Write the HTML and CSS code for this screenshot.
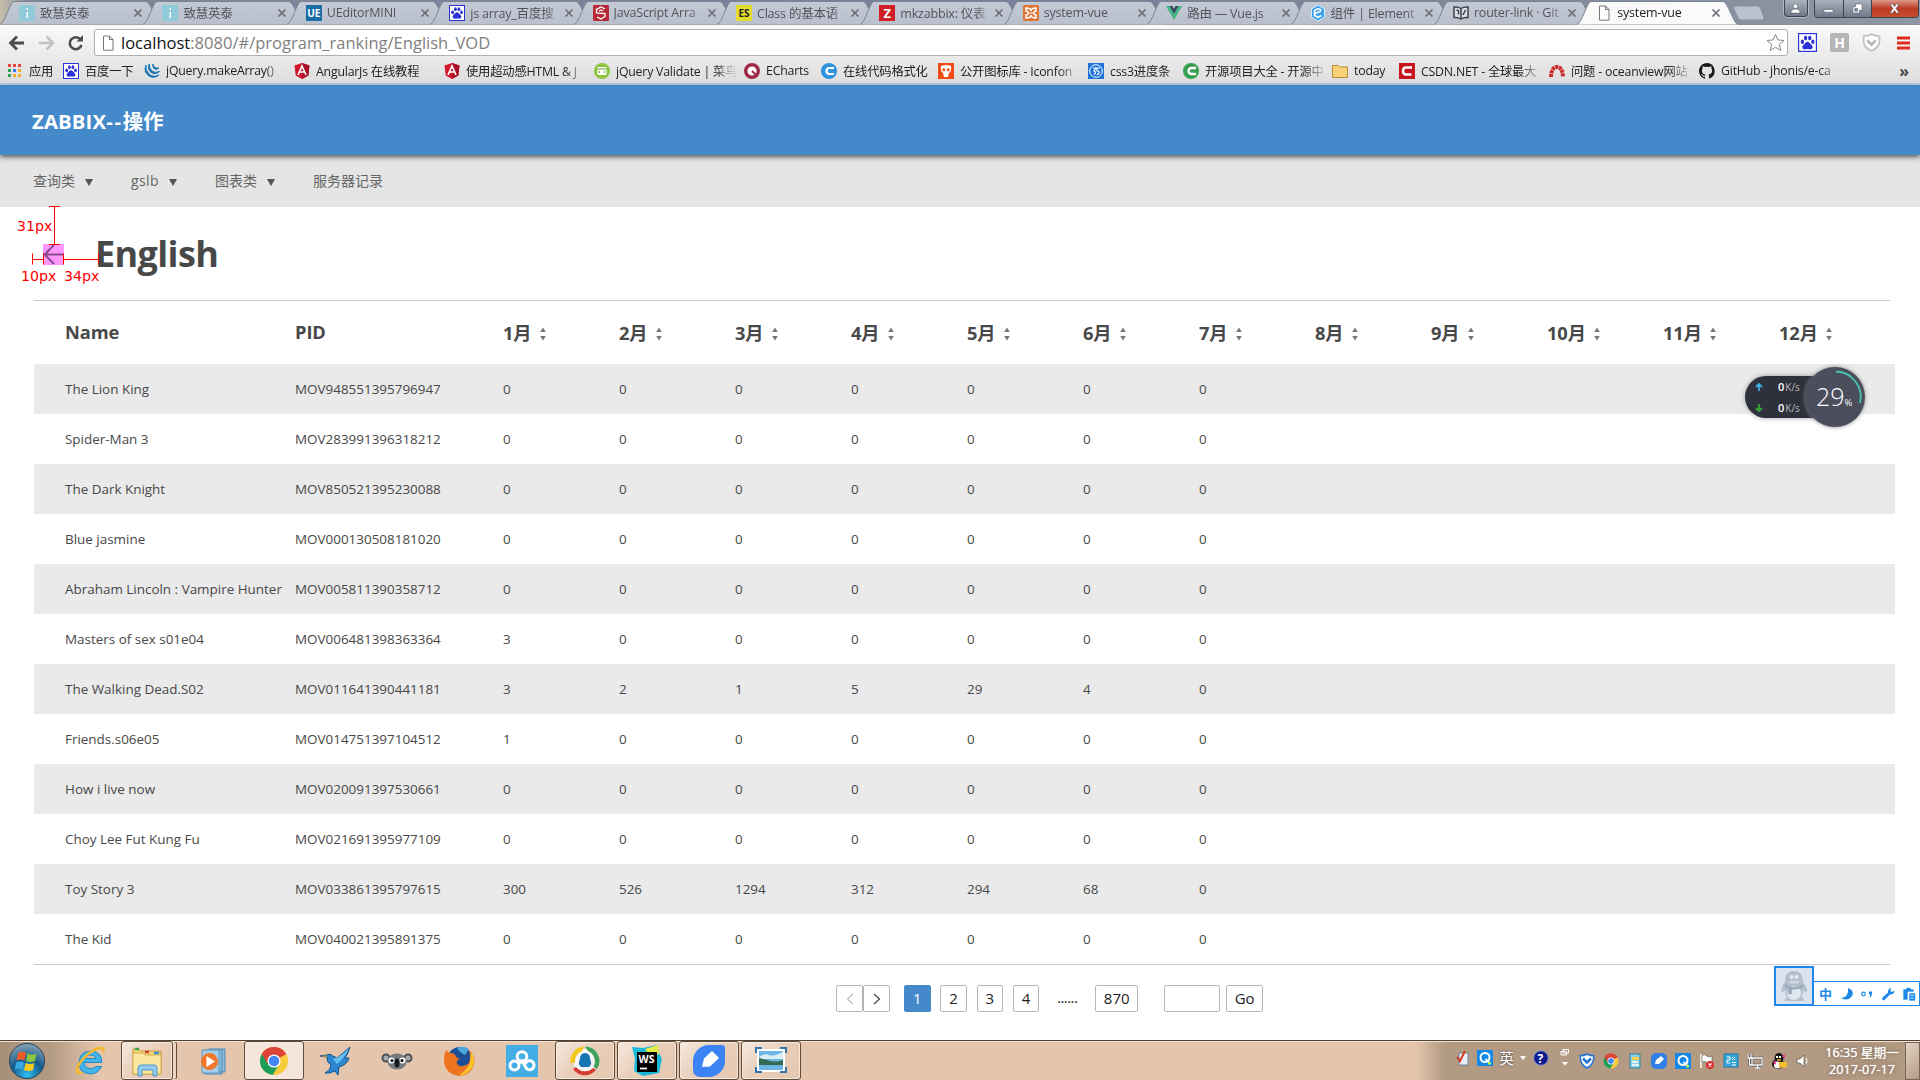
FILE: index.html
```html
<!DOCTYPE html>
<html lang="zh"><head><meta charset="utf-8"><title>system-vue</title><link rel="stylesheet" href="styles.css"></head>
<body>
<svg class="defs" width="0" height="0"><defs>
<linearGradient id="tabFill" x1="0" y1="0" x2="0" y2="1"><stop offset="0" stop-color="#c3cad6"/><stop offset="1" stop-color="#b9c0cc"/></linearGradient>
<symbol id="tab" viewBox="0 0 161 25"><path d="M0 24.5C5 23.500 10 1.500 14 1.500H146C151 1.500 156 23.500 161 24.500" stroke="#7c8494"/></symbol>
<symbol id="page" viewBox="0 0 16 16"><path d="M3.500 1H9.500L13 4.500V15.200H3.500ZM9.500 1V4.500H13" fill="#fff" stroke="#777"/></symbol>
<symbol id="cross" viewBox="0 0 10 10"><path d="M1.500 1.500L8.500 8.500M8.500 1.500L1.500 8.500" stroke-width="1.700"/></symbol>
<symbol id="zh" viewBox="0 0 16 16"><rect width="16" height="16" fill="#8fcbd8"/><path d="M7.500 3h1.500v2h-1.500zM7.500 7h1.500v6h-1.500z" fill="#fff"/></symbol>
<symbol id="paw" viewBox="0 0 16 16"><rect x=".5" y=".5" width="15" height="15" fill="#fff" stroke="#2a32d8"/><g fill="#2a32d8"><ellipse cx="3.700" cy="7.300" rx="1.400" ry="1.900"/><ellipse cx="6.400" cy="4.200" rx="1.400" ry="1.900"/><ellipse cx="9.900" cy="4.200" rx="1.400" ry="1.900"/><ellipse cx="12.500" cy="7.300" rx="1.400" ry="1.900"/><path d="M8 7.300C6.500 7.300 5.800 9 4.500 10C2.800 11.500 3.800 14 6 13.600Q8 13.200 10 13.600C12.200 14 13.200 11.500 11.500 10C10.200 9 9.500 7.300 8 7.300Z"/></g></symbol>
<symbol id="ang" viewBox="0 0 16 16"><path d="M8 0L15.500 2.600L14.300 12.500L8 16L1.700 12.500L.5 2.600Z" fill="#d2182f"/><path d="M8 0L15.500 2.600L14.300 12.500L8 16Z" fill="#a8132a"/><path d="M4 12L8 3L12 12M5.700 9H10.300" fill="none" stroke="#fff" stroke-width="1.600"/></symbol>
<symbol id="chrome" viewBox="0 0 32 32"><circle cx="16" cy="16" r="15" fill="#f7cc3c"/><path d="M16 16L3 8.500A15 15 0 0 1 29 8.500Z" fill="#dc4437"/><path d="M3 8.500A15 15 0 0 0 14.500 30.900L21 20L16 16Z" fill="#1b9e5a"/><path d="M3 8.500L9.500 19.500L16 9H29A15 15 0 0 0 3 8.500Z" fill="#dc4437"/><circle cx="16" cy="16" r="7" fill="#fff"/><circle cx="16" cy="16" r="5.600" fill="#4285f4"/></symbol>
<symbol id="qq" viewBox="0 0 16 16"><rect width="16" height="16" fill="#1289e8"/><circle cx="8" cy="7.500" r="4.500" fill="none" stroke="#fff" stroke-width="2"/><path d="M8.500 9L12 12" stroke="#fff" stroke-width="2"/><rect x="11" y="12" width="3" height="2.500" fill="#b8f04c"/></symbol>
<symbol id="sort" viewBox="0 0 8 16"><path d="M4 1.500L6.800 6H1.200ZM4 14.500L1.200 10H6.800Z" fill="#777"/></symbol>
</defs></svg>

<header class="browser">
<div class="tabs">
<div class="tab"><svg class="shape"><use href="#tab"/></svg><svg class="i16"><use href="#zh"/></svg><span>致慧英泰</span><svg class="x"><use href="#cross"/></svg></div>
<div class="tab"><svg class="shape"><use href="#tab"/></svg><svg class="i16"><use href="#zh"/></svg><span>致慧英泰</span><svg class="x"><use href="#cross"/></svg></div>
<div class="tab"><svg class="shape"><use href="#tab"/></svg><b class="i16 ue">UE</b><span>UEditorMINI</span><svg class="x"><use href="#cross"/></svg></div>
<div class="tab"><svg class="shape"><use href="#tab"/></svg><svg class="i16"><use href="#paw"/></svg><span>js array_百度搜</span><svg class="x"><use href="#cross"/></svg></div>
<div class="tab"><svg class="shape"><use href="#tab"/></svg><svg class="i16" viewBox="0 0 16 16"><rect width="16" height="16" rx="1" fill="#b52b3a"/><path d="M12 4L8 2L3.500 4.500V8L12 8.500V11.500L8 14L4 12M6 6L8 5L10 6" fill="none" stroke="#fff" stroke-width="1.300"/></svg><span>JavaScript Arra</span><svg class="x"><use href="#cross"/></svg></div>
<div class="tab"><svg class="shape"><use href="#tab"/></svg><b class="i16 es">ES</b><span>Class 的基本语</span><svg class="x"><use href="#cross"/></svg></div>
<div class="tab"><svg class="shape"><use href="#tab"/></svg><b class="i16 zb">Z</b><span>mkzabbix: 仪表</span><svg class="x"><use href="#cross"/></svg></div>
<div class="tab"><svg class="shape"><use href="#tab"/></svg><svg class="i16" viewBox="0 0 16 16"><rect width="16" height="16" rx="1.500" fill="#de7432"/><path d="M3 3Q8 3 8 6Q8 3 13 3V6Q11 6 11 8Q11 10 13 10V13Q8 13 8 10Q8 13 3 13V10Q5 10 5 8Q5 6 3 6Z" fill="none" stroke="#fff" stroke-width="1.500"/><path d="M5 8h6" stroke="#fff"/></svg><span>system-vue</span><svg class="x"><use href="#cross"/></svg></div>
<div class="tab"><svg class="shape"><use href="#tab"/></svg><svg class="i16" viewBox="0 0 16 16"><path d="M0 1H3.500L8 9L12.500 1H16L8 15Z" fill="#41b883"/><path d="M3.500 1H6.500L8 4L9.500 1H12.500L8 9Z" fill="#35495e"/></svg><span>路由 — Vue.js</span><svg class="x"><use href="#cross"/></svg></div>
<div class="tab"><svg class="shape"><use href="#tab"/></svg><svg class="i16" viewBox="0 0 16 16"><path d="M8 0L14.500 4V12L8 16L1.500 12V4Z" fill="#3ca0ee" stroke="#d7efff"/><path d="M11.500 5L8 3.500L4.500 5.500V10.500L8 12.500L11.500 10.500M5 8.500L11 6" fill="none" stroke="#fff" stroke-width="1.500"/></svg><span>组件 | Element</span><svg class="x"><use href="#cross"/></svg></div>
<div class="tab"><svg class="shape"><use href="#tab"/></svg><svg class="i16" viewBox="0 0 16 16"><path d="M1 2Q5 1.500 8 3.500Q11 1.500 15 2V12.500Q11 12 8 14Q5 12 1 12.500ZM8 3.500V14M3.500 5L5.500 5.500V9.500M10 10L12.500 5" fill="#dce0e6" stroke="#3c4148" stroke-width="1.500"/></svg><span>router-link · Git</span><svg class="x"><use href="#cross"/></svg></div>
<div class="tab active"><svg class="shape"><use href="#tab"/></svg><svg class="i16"><use href="#page"/></svg><span>system-vue</span><svg class="x"><use href="#cross"/></svg></div>
<svg class="newtab" viewBox="0 0 34 16"><path d="M1.500 3Q1.500 1 4 1H25Q27.500 1 28.500 3L32 13Q32 15 30 15H9Q7 15 6 13Z" fill="#bac2cf" stroke="#8b93a3"/></svg>
<div class="winbtns"><i class="user"><svg viewBox="0 0 12 12"><circle cx="6" cy="3.500" r="2.500"/><path d="M1 11Q1 6.500 6 6.500T11 11Z"/></svg></i><div class="group"><i><svg viewBox="0 0 12 12"><path d="M1 7h10v3H1z"/></svg></i><i><svg viewBox="0 0 12 12"><path d="M4 1h7v7h-3v3H1V4h3zM3 6v3h3V6z" fill-rule="evenodd"/></svg></i><i class="close"><svg viewBox="0 0 12 12"><path d="M1 1h3l2 3 2-3h3L7.700 6 11 11H8L6 8l-2 3H1l3.300-5z"/></svg></i></div></div>
</div>
<div class="toolbar">
<svg class="nav" viewBox="0 0 94 30"><path d="M24 15H11M17 8.500L10.500 15L17 21.500" fill="none" stroke="#4c4c4c" stroke-width="2.800"/><path d="M39 15H52M46.500 8.500L53 15L46.500 21.500" fill="none" stroke="#c2c2c2" stroke-width="2.500"/><path d="M80.500 11.500A6 6 0 1 0 81.500 17" fill="none" stroke="#4c4c4c" stroke-width="2.600"/><path d="M83 7V13.500H76.500Z" fill="#4c4c4c"/></svg>
<div class="address"><svg class="i16"><use href="#page"/></svg><p><b>localhost</b>:8080/#/program_ranking/English_VOD</p><svg class="star" viewBox="0 0 20 20"><path d="M10 1.500L12.500 7.300L19 7.900L14 12L15.600 18.300L10 15L4.400 18.300L6 12L1 7.900L7.500 7.300Z" fill="#fff" stroke="#808080"/></svg></div>
<svg class="ext" viewBox="0 0 16 16"><use href="#paw"/></svg><b class="ext h">H</b>
<svg class="ext" viewBox="0 0 18 18"><path d="M9 1Q13 3 16.500 3V8Q16 14 9 17Q2 14 1.500 8V3Q5 3 9 1Z" fill="#fff" stroke="#c4c4c4" stroke-width="1.800"/><path d="M5 7L9 11L13 7" fill="none" stroke="#b5b5b5" stroke-width="2.500"/></svg>
<svg class="menu" viewBox="0 0 14 14"><path d="M0 2h13M0 7h13M0 12h13" stroke="#e02b20" stroke-width="3"/></svg>
</div>
<div class="bookmarks">
<a style="width:56px"><svg class="i16" viewBox="0 0 16 16"><g fill="#e8453c"><path d="M1 1h3v3H1zM6 1h3v3H6zM11 1h3v3h-3z"/></g><path d="M1 6h3v3H1zM1 11h3v3H1z" fill="#2fa45a"/><path d="M6 6h3v3H6z" fill="#3b7dee"/><path d="M11 6h3v3h-3zM6 11h3v3H6zM11 11h3v3h-3z" fill="#f2ae25"/></svg><span>应用</span></a>
<a style="width:81px"><svg class="i16"><use href="#paw"/></svg><span>百度一下</span></a>
<a style="width:150px"><svg class="i16" viewBox="0 0 16 16"><path d="M2 2Q-1 9 5 13Q10 16 15 12Q9 15 5 11Q1 7 2 2ZM5 1Q3 7 8 10Q12 12 15.500 8.500Q11 10.500 8 8Q5 5 5 1ZM9 1Q8 4 10.500 6Q13 7 15 5Q12 5.500 10.500 4Q9 3 9 1Z" fill="#1b76b5" stroke="#1b76b5"/></svg><span>jQuery.makeArray()</span></a>
<a style="width:150px"><svg class="i16"><use href="#ang"/></svg><span>AngularJs 在线教程</span></a>
<a style="width:150px"><svg class="i16"><use href="#ang"/></svg><span>使用超动感HTML &amp; J</span></a>
<a style="width:150px"><svg class="i16" viewBox="0 0 16 16"><circle cx="8" cy="8" r="8" fill="#8cc63f"/><rect x="3.500" y="4" width="9" height="8" rx="1" fill="#fff"/><path d="M3.500 6h9M6 8l-1 1 1 1M10 8l1 1-1 1" fill="none" stroke="#6da12a"/></svg><span>jQuery Validate | 菜鸟</span></a>
<a style="width:77px"><svg class="i16" viewBox="0 0 16 16"><circle cx="8" cy="8" r="6.300" fill="#fff" stroke="#9e2945" stroke-width="3.400"/><path d="M8 8L13 13" stroke="#9e2945" stroke-width="2"/></svg><span>ECharts</span></a>
<a style="width:117px"><svg class="i16" viewBox="0 0 16 16"><circle cx="8" cy="8" r="8" fill="#2d93df"/><path d="M13 5H8.500a3 3 0 1 0 0 6H13" fill="none" stroke="#fff" stroke-width="2.200"/></svg><span>在线代码格式化</span></a>
<a style="width:150px"><svg class="i16" viewBox="0 0 16 16"><rect width="16" height="16" fill="#f44b16"/><path d="M3 3Q8 1 13 3Q14 8 11 10L10 14H6L5 10Q2 8 3 3Z" fill="#fff"/><circle cx="5.800" cy="6.800" r="1.500" fill="#f44b16"/><circle cx="10.200" cy="6.800" r="1.500" fill="#f44b16"/></svg><span>公开图标库 - Iconfon</span></a>
<a style="width:95px"><svg class="i16" viewBox="0 0 16 16"><rect width="16" height="16" fill="#1f74dc"/><circle cx="8" cy="8" r="6.300" fill="none" stroke="#fff"/><path d="M5 5h3L6 8q3 1 0 3.500M12 5H9v3q3 0 2 2t-2 1" fill="none" stroke="#fff" stroke-width="1.200"/></svg><span>css3进度条</span></a>
<a style="width:149px"><svg class="i16" viewBox="0 0 16 16"><circle cx="8" cy="8" r="8" fill="#36a04d"/><path d="M13 5H8.500a3 3 0 1 0 0 6H13" fill="none" stroke="#fff" stroke-width="2.400"/></svg><span>开源项目大全 - 开源中</span></a>
<a style="width:67px"><svg class="i16" viewBox="0 0 16 16"><path d="M.5 2.500H6L7.500 4H15.500V14.500H.5Z" fill="#f8d37a" stroke="#b98c2e"/></svg><span>today</span></a>
<a style="width:150px"><svg class="i16" viewBox="0 0 16 16"><rect width="16" height="16" fill="#c8141c"/><path d="M13 4.500H7Q4 4.500 4 8T7 11.500H12.500" fill="none" stroke="#fff" stroke-width="2.500"/></svg><span>CSDN.NET - 全球最大</span></a>
<a style="width:150px"><svg class="i16" viewBox="0 0 16 16"><path d="M2 14Q2.500 4 8 4T14 14" fill="none" stroke="#cc2a2a" stroke-width="4" stroke-dasharray="3 .7"/></svg><span>问题 - oceanview网站</span></a>
<a style="width:150px"><svg class="i16" viewBox="0 0 16 16"><path fill="#191717" d="M8 0C3.600 0 0 3.600 0 8c0 3.500 2.300 6.500 5.500 7.600.4.100.5-.2.500-.4v-1.500c-2.200.5-2.700-1-2.700-1-.4-.9-.9-1.200-.9-1.200-.7-.5.100-.5.100-.5.800.1 1.200.8 1.200.8.700 1.300 1.900.9 2.300.7.100-.5.300-.9.500-1.100-1.800-.2-3.600-.9-3.600-4 0-.9.300-1.600.8-2.100-.1-.2-.4-1 .1-2.100 0 0 .7-.2 2.200.8a7.700 7.700 0 0 1 4 0c1.500-1 2.200-.8 2.200-.8.400 1.100.2 1.900.1 2.100.5.600.8 1.300.8 2.100 0 3.100-1.900 3.700-3.700 3.900.3.300.6.800.6 1.500v2.200c0 .2.100.5.600.4A8 8 0 0 0 8 0z"/></svg><span>GitHub - jhonis/e-ca</span></a>
<strong>»</strong>
</div>
</header>

<main>
<div class="brand">ZABBIX<span>--</span>操作</div>
<nav class="nav2"><a>查询类<i></i></a><a class="wide">gslb<i></i></a><a>图表类<i></i></a><a>服务器记录</a></nav>
<div class="title"><svg class="back" viewBox="0 0 21 21"><rect width="21" height="21" fill="#ff97ff"/><path d="M20 10.500H2M11 1L1.700 10.500L11 20" fill="none" stroke="#8a4a90" stroke-width="2"/></svg><h1>English</h1>
<svg class="measure" viewBox="0 0 110 82"><path d="M49 .5h11M54.500 0v38M49 38.500h11M32.500 47.500v11M32 53.500h12M43.500 47.500v11M63.500 47.500v11M63 53.500h35M98.500 47.500v11" fill="none" stroke="#f00"/><text x="17" y="25">31px</text><text x="21" y="75">10px</text><text x="64" y="75">34px</text></svg></div>
<section class="listing">
<table>
<colgroup><col class="c1"><col class="c2"><col span="12" class="cm"></colgroup>
<thead><tr><th>Name<th>PID<th>1月<svg><use href="#sort"/></svg><th>2月<svg><use href="#sort"/></svg><th>3月<svg><use href="#sort"/></svg><th>4月<svg><use href="#sort"/></svg><th>5月<svg><use href="#sort"/></svg><th>6月<svg><use href="#sort"/></svg><th>7月<svg><use href="#sort"/></svg><th>8月<svg><use href="#sort"/></svg><th>9月<svg><use href="#sort"/></svg><th>10月<svg><use href="#sort"/></svg><th>11月<svg><use href="#sort"/></svg><th>12月<svg><use href="#sort"/></svg></tr></thead>
<tbody>
<tr><td>The Lion King<td>MOV948551395796947<td>0<td>0<td>0<td>0<td>0<td>0<td>0<td><td><td><td><td></tr>
<tr><td>Spider-Man 3<td>MOV283991396318212<td>0<td>0<td>0<td>0<td>0<td>0<td>0<td><td><td><td><td></tr>
<tr><td>The Dark Knight<td>MOV850521395230088<td>0<td>0<td>0<td>0<td>0<td>0<td>0<td><td><td><td><td></tr>
<tr><td>Blue jasmine<td>MOV000130508181020<td>0<td>0<td>0<td>0<td>0<td>0<td>0<td><td><td><td><td></tr>
<tr><td>Abraham Lincoln : Vampire Hunter<td>MOV005811390358712<td>0<td>0<td>0<td>0<td>0<td>0<td>0<td><td><td><td><td></tr>
<tr><td>Masters of sex s01e04<td>MOV006481398363364<td>3<td>0<td>0<td>0<td>0<td>0<td>0<td><td><td><td><td></tr>
<tr><td>The Walking Dead.S02<td>MOV011641390441181<td>3<td>2<td>1<td>5<td>29<td>4<td>0<td><td><td><td><td></tr>
<tr><td>Friends.s06e05<td>MOV014751397104512<td>1<td>0<td>0<td>0<td>0<td>0<td>0<td><td><td><td><td></tr>
<tr><td>How i live now<td>MOV020091397530661<td>0<td>0<td>0<td>0<td>0<td>0<td>0<td><td><td><td><td></tr>
<tr><td>Choy Lee Fut Kung Fu<td>MOV021691395977109<td>0<td>0<td>0<td>0<td>0<td>0<td>0<td><td><td><td><td></tr>
<tr><td>Toy Story 3<td>MOV033861395797615<td>300<td>526<td>1294<td>312<td>294<td>68<td>0<td><td><td><td><td></tr>
<tr><td>The Kid<td>MOV040021395891375<td>0<td>0<td>0<td>0<td>0<td>0<td>0<td><td><td><td><td></tr>
</tbody></table></section>
<div class="pager"><a class="w27"><svg viewBox="0 0 10 14"><path d="M8 2L2.500 7L8 12" stroke="#bbb"/></svg></a><a class="w27"><svg viewBox="0 0 10 14"><path d="M2 2L7.500 7L2 12" stroke="#444"/></svg></a><a class="on">1</a><a>2</a><a>3</a><a>4</a><span>......</span><a class="last">870</a><a class="input"></a><a class="go">Go</a></div>
</main>

<aside class="speed"><div class="rates"><p><svg viewBox="0 0 8 8"><path d="M4 8V2M1 4L4 1L7 4" stroke="#43aee8"/></svg><b>0</b>K/s</p><p><svg viewBox="0 0 8 8"><path d="M4 0V6M1 4L4 7L7 4" stroke="#37a83c"/></svg><b>0</b>K/s</p></div><div class="ball"><svg viewBox="0 0 60 60"><path d="M31 4.500A25.500 25.500 0 0 1 55 36" fill="none" stroke="#4cc4b4" stroke-width="1.800"/></svg>29<small>%</small></div></aside>

<aside class="ime"><div class="penguin"><svg viewBox="0 0 34 34"><path d="M17 2C10 2 8 7 8 13Q4 18 4.500 23Q6 24 8 21Q8 26 10 28Q7 30 8 32H16H26Q28 30 24.500 28Q26 25 26 21Q29 25 30 22Q30 17 26 13C26 7 24 2 17 2Z" fill="#b3bfcd"/><ellipse cx="17" cy="24" rx="7" ry="7" fill="#dfe7f1"/><path d="M8 15Q17 21 26 15L26.500 18Q17 23 8 18ZM11 18h4v7h-4z" fill="#9eadbd"/><circle cx="14.500" cy="8" r="2" fill="#e6edf5"/><circle cx="19.500" cy="8" r="2" fill="#e6edf5"/><ellipse cx="17" cy="13" rx="5" ry="1.500" fill="#d3dce6"/></svg></div>
<div class="imebar"><b>中</b><svg viewBox="0 0 14 14"><path d="M8 1Q15 4 12 9Q8 15 1 11Q9 10 8 1Z"/></svg><svg viewBox="0 0 14 14"><circle cx="3.500" cy="7" r="1.800" fill="none" stroke="#1e88e8" stroke-width="1.200"/><circle cx="10.500" cy="6" r="1.800"/><path d="M12 6Q12 9.500 9.500 10.500L10.500 7Z"/></svg><svg viewBox="0 0 14 14"><path d="M1 11L7 5.500Q6.500 2 10 1L9.500 4L11 5L13.500 3.500Q13.500 7.500 9 7.500L3 13.500Q1 13 1 11Z"/></svg><svg viewBox="0 0 14 14"><path d="M1 2H4V.5H9V2H12V5H6V13H1ZM7 6H13.500V14H7ZM8.500 8.500H12M8.500 11H12" stroke="#fff" stroke-width=".7"/></svg></div></aside>

<footer class="taskbar">
<svg class="start" viewBox="0 0 38 38"><defs><radialGradient id="orb" cx=".5" cy=".9" r=".9"><stop offset="0" stop-color="#2fc0f0"/><stop offset=".5" stop-color="#145a8c"/><stop offset="1" stop-color="#8aa5b8"/></radialGradient></defs><circle cx="19" cy="19" r="17.500" fill="url(#orb)" stroke="#23405c"/><path d="M10 11Q14 8.500 18 11L16.500 18.500Q12.500 16.500 8.500 18.500Z" fill="#f05a28"/><path d="M19.500 11.500Q24 13.500 28.500 11.500L27 19Q22.500 21 18 19Z" fill="#8cc63e"/><path d="M8 20.500Q12 18.500 16 20.500L14.500 27.500Q10.500 25.500 6.800 27.500Z" fill="#38a8e4"/><path d="M17.500 21Q22 23 26.500 21L25 28Q20.500 30 16 28Z" fill="#fcc91c"/></svg>
<div class="task t1"><svg viewBox="0 0 32 32"><path d="M28 17.500H10Q10.500 23.500 17 23.500Q20 23.500 22 21.500H27.500Q24 29 16.500 29Q4.500 28 5 17Q6 6 17 6Q28 7 28 17.500ZM10.500 13.500H22Q21 10 16.500 10Q11.500 10 10.500 13.500Z" fill="#42b4ea" stroke="#2389c8" fill-rule="evenodd"/><path d="M3 29Q-1 24 8 13Q19 1 28 1.500Q33 2.500 29 10Q30 4 25.500 4.500Q18 6 10.500 14Q3 23 5 26Q7 28 10 26.500Q6 30.500 3 29Z" fill="#f5b92d"/></svg></div>
<div class="task box multi"><svg viewBox="0 0 32 32"><path d="M2 4H8L10 6H30V29H2Z" fill="#f1d578" stroke="#c59a3b"/><path d="M2 8H12L14 10H30V29H2Z" fill="#fae7a0" stroke="#d3ad50"/><path d="M4 4h4" stroke="#37a64b" stroke-width="2.500"/><path d="M14 7h4" stroke="#d0402e" stroke-width="2.500"/><path d="M23 8h5" stroke="#3a8ad0" stroke-width="2.500"/><path d="M7 31V23Q7 20 10 20H23Q26 20 26 23V31H22V25H11V31Z" fill="#92cdf0" stroke="#4c94c8"/></svg></div>
<div class="task t3"><svg viewBox="0 0 32 32"><path d="M12 4H28V27H12ZM8 5H25V29H8Z" fill="#8ebddb" stroke="#4a87b4"/><path d="M5 5H22V28H5Z" fill="#a5cde8" stroke="#5d96bf"/><circle cx="12.500" cy="16.500" r="8.500" fill="#f0762a"/><path d="M9.500 11L18 16.500L9.500 22Z" fill="#fff"/></svg></div>
<div class="task box chrome"><svg><use href="#chrome"/></svg></div>
<div class="task t5"><svg viewBox="0 0 32 32"><path d="M1 11L8 10Q11 8 14 11L18 13Q24 8 31 2Q29 9 26 13L30 13Q28 20 20 22L19 30L16 26Q10 29 6 28Q12 25 12 20Q7 17 8 12Z" fill="#2c86cf" stroke="#13578e"/><path d="M1 11L8 10.500V12Z" fill="#e8a72c"/><path d="M14 14Q22 12 30 3Q26 13 18 19Z" fill="#67bdf0"/></svg></div>
<div class="task t6"><svg viewBox="0 0 32 32"><g fill="#4c5055"><circle cx="5" cy="13" r="4.500"/><circle cx="27" cy="13" r="4.500"/></g><circle cx="5" cy="13" r="2.500" fill="#aaa"/><circle cx="27" cy="13" r="2.500" fill="#aaa"/><ellipse cx="16" cy="16.500" rx="9.500" ry="8" fill="#74797e"/><circle cx="10.500" cy="15.500" r="3" fill="#fff"/><circle cx="21.500" cy="15.500" r="3" fill="#fff"/><circle cx="11" cy="15.500" r="1.500"/><circle cx="21" cy="15.500" r="1.500"/><ellipse cx="16" cy="18" rx="2.500" ry="4.500" fill="#17191b"/></svg></div>
<div class="task t7"><svg viewBox="0 0 32 32"><circle cx="17" cy="15" r="13" fill="#1c4f96"/><path d="M14 3Q20 0 26 4L22 10Q17 8 14 3Z" fill="#4fa6dc"/><path d="M3 5Q5 8 8 8Q12 8 13 12L17 14Q13 15 14 19Q19 24 26 18Q28 12 26 5Q33 12 31 20Q27 31 16 31Q2 29 1 16Q1 9 3 5Z" fill="#ee7420"/><path d="M28 7Q34 15 29 23Q23 31 16 30Q25 25 27 17Z" fill="#fbc22c"/></svg></div>
<div class="task t8"><svg viewBox="0 0 32 32"><rect width="32" height="32" fill="#43aee6"/><g fill="none" stroke="#fff" stroke-width="3"><circle cx="8.500" cy="20.500" r="4.500"/><circle cx="16" cy="11.500" r="4.800"/><path d="M12.500 18.500L16 16L20.500 23.500A4.500 4.500 0 1 0 20 17.500L17.500 20.500"/></g></svg></div>
<div class="task box g1"><svg viewBox="0 0 32 32"><circle cx="16" cy="16" r="12" fill="#f5f5f5"/><path d="M1.500 18A14.500 14.500 0 0 1 15 1.500L13 6A11.500 11.500 0 0 0 6 18Z" fill="#f3c81e"/><path d="M16 1.500A14.500 14.500 0 0 1 28 24L24.500 22A11.500 11.500 0 0 0 19 6Z" fill="#3fa35d"/><path d="M27 25A14.500 14.500 0 0 1 4 24L7 22A11.500 11.500 0 0 0 24 23Z" fill="#d83b30"/><path d="M16 8Q21 8 21 14Q23 18 21.500 20L20 22H12L10.500 20Q9 18 11 14Q11 8 16 8Z" fill="#1775b4"/></svg></div>
<div class="task box g2"><svg viewBox="0 0 32 32"><path d="M1 2L12 3L26 0L28 8L31 14L28 28L12 31L3 26L4 14Z" fill="#1ab8d8"/><path d="M14 4L27 0L28 9L20 12Z" fill="#e6eb45"/><rect x="6" y="7" width="20" height="20" fill="#000"/><path d="M9 23.500h7" stroke="#fff" stroke-width="1.700"/><text x="7.500" y="17.500" fill="#fff" font-size="10.500" font-weight="700">WS</text></svg></div>
<div class="task box g3"><svg viewBox="0 0 32 32"><path d="M16 0H29Q32 0 32 3V16A16 16 0 0 1 16 32H8Q0 32 0 24V16A16 16 0 0 1 16 0Z" fill="#3c83f6"/><path d="M9 22L11 13.500L19 6L26 13L17 21.500Z" fill="#fff"/></svg></div>
<div class="task box g4"><svg viewBox="0 0 32 32"><rect x="3" y="5" width="26" height="21" fill="#6eb7e4" stroke="#fff" stroke-width="2"/><path d="M4 12Q10 8 14 10T28 7V14H4Z" fill="#d9edf5"/><path d="M4 13L12 15Q20 18 28 15V20H4Z" fill="#346b50"/><path d="M1 8V3H7M25 3H31V8M31 22V27H25M7 27H1V22" fill="none" stroke="#3374ad" stroke-width="2"/></svg></div>
<div class="tray">
<svg class="up" viewBox="0 0 16 16"><path d="M4 3H13V15H4Z" fill="#e9eef5" stroke="#6b84a0"/><path d="M2 7L5 11L10 1" fill="none" stroke="#d63b20" stroke-width="2"/></svg>
<svg class="q up"><use href="#qq"/></svg><span class="en">英</span><i class="down"></i>
<svg class="help up" viewBox="0 0 16 16"><circle cx="8" cy="8" r="7.300" fill="#101e8c" stroke="#8c95d8"/><text x="4.600" y="12.500" fill="#fff" font-size="12" font-weight="700">?</text></svg>
<svg class="restore up" viewBox="0 0 10 20"><path d="M3 1.500H8.500V5H3ZM1 3.500H6.500V7H1Z" fill="none" stroke="#fff"/><path d="M2 14H8L5 17.500Z" fill="#fff"/></svg>
<div class="icons">
<svg viewBox="0 0 16 16"><path d="M8 0Q12 2 15.500 2Q16 12 8 16Q0 12 .5 2Q4 2 8 0Z" fill="#2874d4"/><path d="M8 2Q11 3.500 14 3.500Q14 11 8 14Q2 11 2 3.500Q5 3.500 8 2Z" fill="#fff"/><path d="M4 5.500L8 9.500L12 5.500" fill="none" stroke="#2874d4" stroke-width="2.500"/></svg>
<svg><use href="#chrome"/></svg>
<svg viewBox="0 0 16 16"><rect x="3" y="1" width="10" height="14" fill="#8bd0e4" stroke="#2d83a2"/><path d="M5 4h7v3H5z" fill="#f1d14a"/><path d="M5 9h6M5 12h7" stroke="#fff" stroke-width="1.500"/></svg>
<svg viewBox="0 0 16 16"><rect width="16" height="16" rx="5" fill="#327fe8"/><path d="M4 11L5 7L10 3L13 6L8 11Z" fill="#fff"/></svg>
<svg><use href="#qq"/></svg>
<svg viewBox="0 0 16 16"><path d="M2 15V1" stroke="#fff" stroke-width="1.500"/><path d="M3 2Q6 1 8 3T13 3V9Q9 10 7 9T3 9Z" fill="#fff" stroke="#555" stroke-width=".6"/><circle cx="11" cy="12" r="4" fill="#d82e2e"/><path d="M9.500 10.500L12.500 13.500M12.500 10.500L9.500 13.500" stroke="#fff" stroke-width="1.200"/></svg>
<svg viewBox="0 0 16 16"><rect x="1" y="1" width="14" height="13" fill="#36a5da" stroke="#147db0"/><path d="M4 4H7V7H4V10H7M9 4L12 7M12 4L9 7M9 9.500H13M9 12H13" fill="none" stroke="#fff"/></svg>
<svg viewBox="0 0 16 16"><path d="M5 5H15V12H5ZM8 15H13M10.500 12V15M1 1V5H4V1M2.500 5V12H5" fill="none" stroke="#444" stroke-width="2.500"/><path d="M5 5H15V12H5ZM8 15H13M10.500 12V15M1 1V5H4V1M2.500 5V12H5" fill="none" stroke="#fff" stroke-width="1.300"/></svg>
<svg viewBox="0 0 16 16"><ellipse cx="8" cy="5" rx="4.500" ry="5" fill="#151515"/><ellipse cx="7" cy="11" rx="6" ry="5" fill="#151515"/><ellipse cx="6.500" cy="12" rx="3.500" ry="3.500" fill="#fff"/><path d="M2 9L5 7.500V12ZM11 3L14 1V6Z" fill="#ec3c9c"/><path d="M6 3v2M9 3v2" stroke="#fff" stroke-width="2"/><path d="M6 7h4" stroke="#f4a21c" stroke-width="1.500"/><rect x="8" y="9" width="8" height="5.500" rx="1" fill="#f6be2e"/></svg>
<svg viewBox="0 0 16 16"><path d="M2 6H5L9 2V14L5 10H2Z" fill="#fff" stroke="#555" stroke-width=".7"/><path d="M11 5Q13 8 11 11" fill="none" stroke="#fff"/></svg>
</div>
<div class="clock"><p>16:35 星期一</p><p>2017-07-17</p></div><div class="desk"></div>
</div>
</footer>
</body></html>
```
FILE: styles.css
```css
*{box-sizing:border-box}
body{margin:0;width:1920px;height:1080px;overflow:hidden;position:relative;display:flex;flex-direction:column;background:#fff;color:#484848;font-family:"Open Sans","Noto Sans CJK SC",sans-serif}
p,h1{margin:0}
a,i,b,svg{flex:none}
i{font-style:normal}
.defs{position:absolute}
.i16{width:16px;height:16px;display:block}
.browser{height:85px;background:linear-gradient(#fafafa 25px,#dedede 82px);border-bottom:2px solid #bfcfe8}
.tabs{height:25px;display:flex;background:linear-gradient(90deg,#c5bda8,#7e8799 30px,#77809a 50%,#7f8899 75%,#8f97a5);border-bottom:1px solid #8d8f94;font-size:12.5px;color:#50545c}
.tab{position:relative;width:143.4px;height:25px;padding-left:19px;display:flex;align-items:center}
.tab>*{position:relative}
.tab .shape{position:absolute;left:0;top:0;width:161px;height:25px;fill:url(#tabFill)}
.tab span{width:95px;margin:0 7px 0 5px;overflow:hidden;white-space:nowrap;letter-spacing:-.2px;mask-image:linear-gradient(90deg,#000 74px,transparent 94px)}
.tab .x{width:10px;height:10px;stroke:#6a6e77}
.active{z-index:2;color:#222}
.active .shape{fill:#fafafa}
.ue,.es,.zb{font-size:10px;line-height:16px;text-align:center;color:#fff;background:#1a6ea6}
.es{background:#e4dc2c;color:#222}.zb{background:#d01f25;font-size:13px}
.newtab{width:34px;height:16px;margin:5px 0 0 11px}
.winbtns{margin-left:18px;display:flex;gap:6px}
.winbtns svg{width:11px;height:11px;fill:#fff;stroke:#4b5363;stroke-width:.6}
.winbtns i{height:17px;display:flex;align-items:center;justify-content:center;width:28px;background:linear-gradient(#a9b1bd,#6f7989)}
.winbtns .user{width:24px;border:1px solid #3d4452;border-top:0;border-radius:0 0 4px 4px;box-shadow:0 0 0 1px #b4bac6}
.group{display:flex;height:18px;border:1px solid #3d4452;border-top:0;border-radius:0 0 4px 4px;overflow:hidden}
.group i+i{border-left:1px solid #3d4452}
.group .close{width:47px;background:linear-gradient(#dd9a8c,#bd3b24 50%,#c84c2c)}
.toolbar{height:35px;padding-top:0;display:flex;align-items:center}
.nav{width:94px;height:30px}
.address{width:1694px;height:27px;border:1px solid #b0b0b0;border-radius:3px;background:#fff;display:flex;align-items:center;padding:0 2px 0 5px}
.address p{flex:1;margin-left:5px;font-size:16.550px;line-height:24px;color:#808080}
.address b{font-weight:400;color:#111}
.star{width:19px;height:19px}
.ext{width:19px;height:19px;margin-left:10px;margin-right:3px}
.h{background:#b5b5b5;color:#fff;border-radius:2px;text-align:center;line-height:19px;font-size:14px}
.menu{width:14px;height:14px;margin-left:13px}
.bookmarks{height:21px;display:flex;align-items:center;padding-left:7px;color:#222;font-size:12.300px}
.bookmarks a{display:flex;align-items:center}
.bookmarks span{margin-left:6px;max-width:122px;overflow:hidden;white-space:nowrap;letter-spacing:-.2px;mask-image:linear-gradient(90deg,#000 98px,transparent 122px)}
.bookmarks strong{margin:0 11px 0 auto;font-size:16px;line-height:14px;color:#444}
.brand{height:70px;background:#4489ca;color:#fff;font-size:20.300px;line-height:72px;font-weight:700;padding-left:32px;position:relative;box-shadow:0 2px 5px #555;letter-spacing:.15px}
.brand span{letter-spacing:1.800px}
.nav2{height:52px;background:#e5e5e5;display:flex;padding:0 33px;font-size:14px;line-height:51px;color:#666}
.nav2 a{margin-right:38px}
.wide{letter-spacing:.4px}
.nav2 i{display:inline-block;border:4px solid transparent;border-top:7px solid #555;border-bottom:0;margin-left:10px}
.title{position:relative;height:93px;padding:0 0 0 43px;display:flex;align-items:center}
.back{width:21px;height:21px;margin-top:2px}
h1{font-size:36px;line-height:50px;margin-left:31px;letter-spacing:-.65px}
.measure{position:absolute;left:0;top:-1px;width:110px;height:82px}
.measure text{font:14.200px "DejaVu Sans",sans-serif;fill:#f00}
.listing{width:1856px;margin-left:34px;height:665px;border-top:1px solid #ccc;border-bottom:1px solid #ccc}
table{width:1861px;table-layout:fixed;border-collapse:collapse}
.c1{width:261px}.c2{width:208px}.cm{width:116px}
th,td{padding:0;text-align:left;font-size:13.450px;height:50px;white-space:nowrap}
th{height:63px;font-size:18.300px;letter-spacing:-.1px;padding-bottom:2px}
th svg{width:8px;height:16px;margin-left:7px;vertical-align:-2px}
th:first-child,td:first-child{padding-left:31px}
tbody tr:nth-child(odd){background:#eaeaea}
.pager{display:flex;margin:20px 0 0 836px;height:27px;font-size:15px;line-height:25px;color:#222}
.pager a{width:26.500px;height:27px;border:1px solid #b5b5b5;border-radius:2px;text-align:center;margin-right:9.800px}
.pager .w27{width:27px;margin-right:0;display:flex;align-items:center;justify-content:center}
.pager svg{width:10px;height:14px;fill:none;stroke-width:1.200}
.pager .on{margin-left:14px;background:#4489ca;border-color:#4489ca;color:#fff}
.pager span{width:20px;margin:0 18px 0 8px;letter-spacing:-.6px}
.pager .last{width:43px;margin-right:26px}
.pager .input{width:56px;margin-right:6px}
.pager .go{width:37px}
.speed{position:absolute;left:1745px;top:367px;width:120px;height:60px}
.rates{position:absolute;left:0;top:9px;width:90px;height:42px;border-radius:21px 0 0 21px;background:#2e313c;color:#bbb;box-shadow:0 0 5px #999;font-size:10px}
.rates p{display:flex;align-items:center;height:21px;padding-left:10px}
.rates svg{width:8px;height:8px;margin-right:15px;fill:none;stroke-width:1.800}
.rates b{color:#fff;font-size:11px;font-weight:600;margin-right:1px}
.ball{position:absolute;left:60px;top:0;width:60px;height:60px;border-radius:50%;background:#4b4e5c;color:#fff;box-shadow:0 0 4px #888;font:300 25px/59px "Open Sans",sans-serif;padding-left:11px}
.ball svg{position:absolute;left:0;top:0;width:60px;height:60px}
.ball small{font-size:9.500px;font-weight:400}
.ime{position:absolute;left:1774px;top:966px;width:146px;height:40px;display:flex;align-items:flex-end}
.penguin{width:40px;height:40px;border:2px solid #1e88f0;background:#dbe3ee;padding:1px}
.penguin svg{width:34px;height:34px}
.imebar{height:25px;flex:1;border:1px solid #1e88e8;border-left:0;background:#fff;display:flex;align-items:center;gap:6.700px;padding-left:5px;color:#1e88e8}
.imebar b{font-size:13px;line-height:20px;width:14px}
.imebar svg{width:14px;height:14px;fill:#1e88e8}
.taskbar{position:absolute;left:0;top:1040px;width:1920px;height:40px;border-top:1px solid #4f4436;box-shadow:inset 0 1px #f5dfcf;background:linear-gradient(90deg,#a78f78 0,#b39a83 50px,#e5c6ad 100px,#e5c6ad 1415px,#b29a83 1445px,#b29a83);display:flex;align-items:center}
.start{width:38px;height:38px;margin-left:8px}
.task{height:39px;width:60px;display:flex;align-items:center;justify-content:center}
.task svg{width:32px;height:32px}
.box{border:1px solid #5d4c3d;border-radius:3px;background:linear-gradient(135deg,#f6e9df,#e8cdb8 50%,#e6c8b0);box-shadow:inset 0 0 0 1px #f7e8dc}
.t1{margin-left:14px}.multi{width:52px;margin-left:1px;box-shadow:inset 0 0 0 1px #f7e8dc,4px 0 0 -1px #ecd4c2,5px 0 0 -1px #5d4c3d}
.t3{margin-left:10px}.chrome{margin-left:1px;background:#f5e5db}.t5,.t6,.t7,.t8{width:62.200px}
.task.chrome svg{width:30px;height:30px}
.g1,.g2,.g3,.g4{margin-left:2px}
.tray{margin-left:auto;display:flex;align-items:center;height:39px}
.tray>svg,.icons svg{width:16px;height:16px}
.tray>.up{margin-bottom:5px}
.q{margin-left:6px}.en{color:#fff;font-size:15px;line-height:20px;margin:0 0 5px 6px;text-shadow:0 0 2px #222}
.down{border:3px solid transparent;border-top:4px solid #fff;border-bottom:0;margin:0 0 5px 6px}
.help{margin-left:7px}
.tray .restore{width:10px;height:20px;margin-left:11px}
.icons{display:flex;gap:8px;margin:1px 0 0 9px}
.clock{color:#fff;font-size:12.700px;line-height:17px;text-align:center;width:78px;margin-left:12px;text-shadow:0 0 1px #fff,0 0 4px #5d4935}
.desk{width:15px;height:38px;margin-left:4px;border:1px solid #786552;background:linear-gradient(135deg,#e4d3c4,#b49c86)}
```
